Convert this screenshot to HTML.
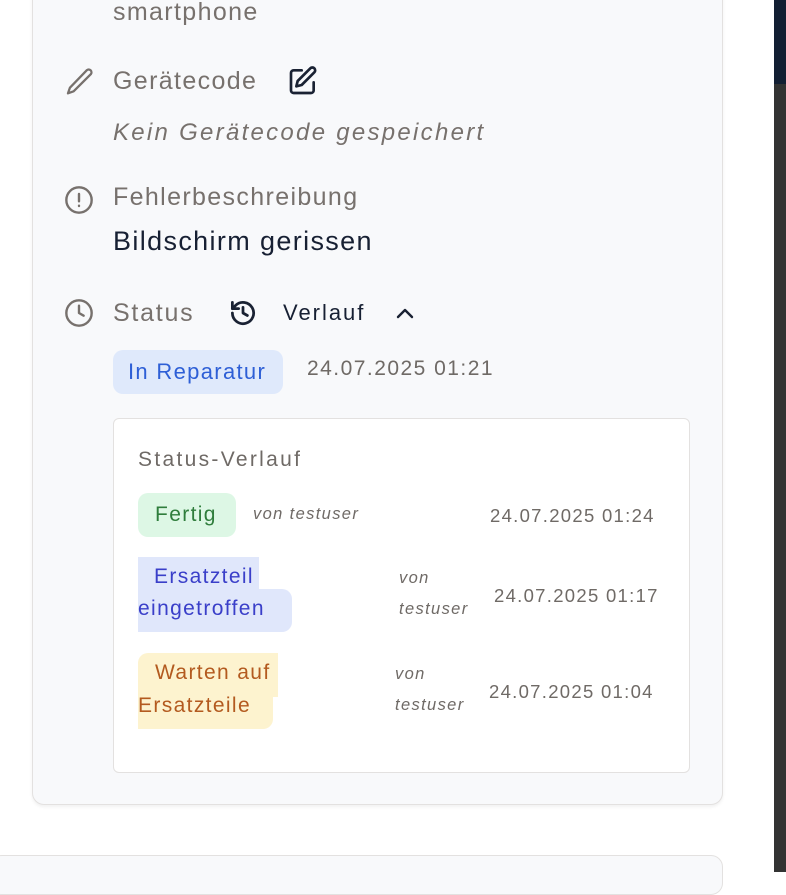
<!DOCTYPE html>
<html><head><meta charset="utf-8"><style>
*{margin:0;padding:0;box-sizing:border-box}
body{width:786px;height:872px;overflow:hidden;background:#fff;font-family:"Liberation Sans",sans-serif;position:relative;letter-spacing:0.085em}
.a{position:absolute;white-space:nowrap}
.card{position:absolute;left:32px;top:-20px;width:691px;height:825px;background:#f8f9fb;border:1.5px solid #e3e1e0;border-radius:12px;box-shadow:0 2px 3px rgba(0,0,0,.06)}
.card2{position:absolute;left:-10px;top:855px;width:733px;height:40px;background:#f8f9fb;border:1.5px solid #e3e1e0;border-radius:12px}
.lab{font-size:25px;color:#77716d}
.inner{position:absolute;left:113px;top:418px;width:577px;height:355px;background:#fff;border:1.5px solid #e3e1e0;border-radius:6px}
.d{font-size:18.5px;color:#6f6a66;letter-spacing:0.07em}
.v{font-size:16.5px;color:#6f6a66;font-style:italic}
</style></head><body>
<div class="card"></div>
<div class="card2"></div>
<div class="a" style="left:774px;top:0;width:12px;height:84px;background:#131f33"></div>
<div class="a" style="left:774px;top:84px;width:12px;height:788px;background:#333"></div>

<div class="a lab" style="left:113px;top:-2px">smartphone</div>

<svg class="a" style="left:63px;top:65px" width="34" height="34" viewBox="0 0 24 24" fill="none" stroke="#77716d" stroke-width="1.6" stroke-linecap="round" stroke-linejoin="round"><path d="M16.9 3.6a2 2 0 0 1 2.8 2.8L7.5 18.6 3.5 20l1.4-4z"/></svg>
<div class="a lab" style="left:113px;top:67px">Gerätecode</div>
<svg class="a" style="left:287px;top:65px" width="32" height="32" viewBox="0 0 24 24" fill="none" stroke="#1a2233" stroke-width="2" stroke-linecap="round" stroke-linejoin="round"><path d="M11 4H5a2 2 0 0 0-2 2v13a2 2 0 0 0 2 2h13a2 2 0 0 0 2-2v-6"/><path d="M17.5 2.5a2.1 2.1 0 0 1 3 3L11 15l-4 1 1-4z"/></svg>
<div class="a" style="left:113px;top:119px;font-size:24px;font-style:italic;color:#77716d;letter-spacing:0.095em">Kein Gerätecode gespeichert</div>

<svg class="a" style="left:63px;top:184px" width="32" height="32" viewBox="0 0 24 24" fill="none" stroke="#77716d" stroke-width="1.8" stroke-linecap="round"><circle cx="12" cy="12" r="9.5"/><path d="M12 7.5v5.5M12 16.3v.2"/></svg>
<div class="a lab" style="left:113px;top:183px">Fehlerbeschreibung</div>
<div class="a" style="left:113px;top:226px;font-size:27px;color:#172033">Bildschirm gerissen</div>

<svg class="a" style="left:63px;top:297px" width="32" height="32" viewBox="0 0 24 24" fill="none" stroke="#77716d" stroke-width="1.8" stroke-linecap="round" stroke-linejoin="round"><circle cx="12" cy="12" r="9.5"/><path d="M12 6.5V12l3.5 2"/></svg>
<div class="a lab" style="left:113px;top:299px;letter-spacing:0.07em">Status</div>
<svg class="a" style="left:228px;top:298px" width="30" height="30" viewBox="0 0 24 24" fill="none" stroke="#1a2233" stroke-width="2.2" stroke-linecap="round" stroke-linejoin="round"><path d="M3.5 12a8.5 8.5 0 1 0 2.5-6L3.5 8.5"/><path d="M3.5 3.5v5h5"/><path d="M12 7.5V12l3.5 2"/></svg>
<div class="a" style="left:283px;top:300px;font-size:22px;color:#172033;letter-spacing:0.09em">Verlauf</div>
<svg class="a" style="left:393px;top:302px" width="24" height="24" viewBox="0 0 24 24" fill="none" stroke="#1a2233" stroke-width="2.4" stroke-linecap="round" stroke-linejoin="round"><path d="M5 15l7-7 7 7"/></svg>

<div class="a" style="left:113px;top:350px;width:170px;height:44px;background:#dfe9fb;border-radius:10px"></div>
<div class="a" style="left:128px;top:359px;font-size:22px;color:#2e5fd6;letter-spacing:0.06em">In Reparatur</div>
<div class="a" style="left:307px;top:357px;font-size:21px;color:#6f6a66;letter-spacing:0.07em">24.07.2025 01:21</div>

<div class="inner"></div>
<div class="a" style="left:138px;top:448px;font-size:21px;color:#6f6a66;letter-spacing:0.11em">Status-Verlauf</div>

<div class="a" style="left:138px;top:493px;width:98px;height:44px;background:#ddf7e5;border-radius:10px"></div>
<div class="a" style="left:155px;top:503px;font-size:21px;color:#2f7d3c">Fertig</div>
<div class="a v" style="left:253px;top:505px">von testuser</div>
<div class="a d" style="left:490px;top:505px">24.07.2025 01:24</div>

<div class="a" style="left:138px;top:557px;width:121px;height:44px;background:#e0e7fb"></div>
<div class="a" style="left:138px;top:589px;width:154px;height:43px;background:#e0e7fb;border-radius:0 10px 10px 0"></div>
<div class="a" style="left:154px;top:565px;font-size:21px;color:#3a3fc9">Ersatzteil</div>
<div class="a" style="left:138px;top:597px;font-size:21px;color:#3a3fc9">eingetroffen</div>
<div class="a v" style="left:399px;top:569px">von</div>
<div class="a v" style="left:399px;top:600px">testuser</div>
<div class="a d" style="left:494px;top:585px">24.07.2025 01:17</div>

<div class="a" style="left:138px;top:653px;width:140px;height:44px;background:#fdf3cf;border-radius:10px 0 0 0"></div>
<div class="a" style="left:138px;top:696px;width:135px;height:33px;background:#fdf3cf;border-radius:0 0 10px 0"></div>
<div class="a" style="left:155px;top:661px;font-size:21px;color:#b35a1f">Warten auf</div>
<div class="a" style="left:138px;top:694px;font-size:21px;color:#b35a1f">Ersatzteile</div>
<div class="a v" style="left:395px;top:665px">von</div>
<div class="a v" style="left:395px;top:696px">testuser</div>
<div class="a d" style="left:489px;top:681px">24.07.2025 01:04</div>
</body></html>
